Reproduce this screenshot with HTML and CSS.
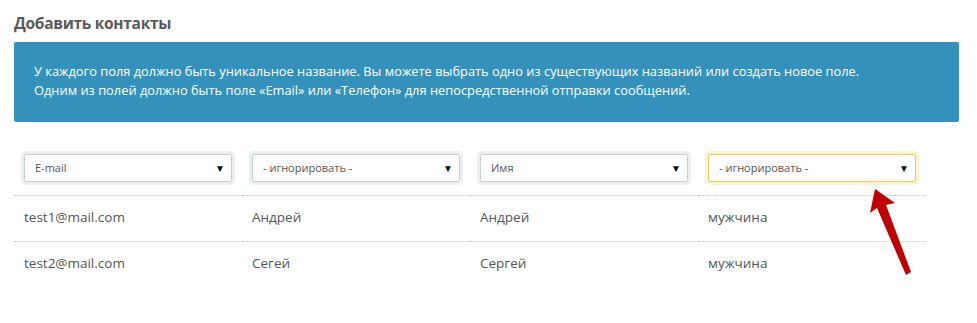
FILE: index.html
```html
<!DOCTYPE html>
<html lang="ru">
<head>
    <meta charset="UTF-8">
    <title>Добавить контакты</title>
    <link rel="stylesheet" href="styles.css">
</head>
<body>
    <div class="page">
        <h2 class="title">Добавить контакты</h2>
        <div class="notice">
            У каждого поля должно быть уникальное название. Вы можете выбрать одно из существующих названий или создать новое поле.<br>
            Одним из полей должно быть поле «Email» или «Телефон» для непосредственной отправки сообщений.
        </div>

        <div class="grid">
            <div class="cell head"><div class="select"><span>E-mail</span><i class="caret">▼</i></div></div>
            <div class="cell head"><div class="select"><span>- игнорировать -</span><i class="caret">▼</i></div></div>
            <div class="cell head"><div class="select"><span>Имя</span><i class="caret">▼</i></div></div>
            <div class="cell head">
                <div class="select active"><span>- игнорировать -</span><i class="caret">▼</i></div>
                <svg class="pointer" width="60" height="100" viewBox="0 0 60 100">
                    <polygon points="17,5 37,19 28,21 53,88 48,91 19,24 12,29" fill="#bf0000"/>
                </svg>
            </div>

            <div class="cell">test1@mail.com</div>
            <div class="cell">Андрей</div>
            <div class="cell">Андрей</div>
            <div class="cell">мужчина</div>

            <div class="cell">test2@mail.com</div>
            <div class="cell">Сегей</div>
            <div class="cell">Сергей</div>
            <div class="cell">мужчина</div>
        </div>
    </div>
</body>
</html>
```

FILE: styles.css
```css
body {
    margin: 0;
    background: #fff;
    color: #555;
    font-family: "Open Sans", sans-serif;
}
.page {
    padding: 0 18px 0 14px;
}
.title {
    margin: 0;
    padding: 12px 0 8px 0;
    font-size: 15.5px;
    letter-spacing: -0.3px;
    line-height: 22px;
    font-weight: bold;
    color: #5a5a5a;
}
.notice {
    background-color: #3391bb;
    color: #fff;
    font-size: 12.85px;
    line-height: 19px;
    padding: 20px 20px 22px 20px;
    border-radius: 2px;
    margin-bottom: 22px;
}
.grid {
    display: grid;
    grid-template-columns: repeat(4, 228px);
}
.cell {
    padding: 10px 10px 13px 10px;
    font-size: 13.5px;
    line-height: 22px;
    border-bottom: 1px dotted #c8c8c8;
}
.cell:nth-last-child(-n+4) {
    border-bottom: none;
}
.head {
    position: relative;
    padding: 10px 10px 13px 10px;
}
.select {
    display: flex;
    justify-content: space-between;
    align-items: center;
    height: 28px;
    box-sizing: border-box;
    padding: 0 6px 0 10px;
    border: 1px solid #c9cfd1;
    border-radius: 2px;
    box-shadow: 0 0 0 3px #eef0f0;
    font-size: 11px;
    color: #555;
}
.select.active {
    border-color: #edc96a;
    box-shadow: 0 0 0 3px #fdf2d2;
}
.caret {
    font-style: normal;
    font-size: 10px;
    color: #111;
}
.pointer {
    position: absolute;
    left: 160px;
    top: 40px;
}
```
